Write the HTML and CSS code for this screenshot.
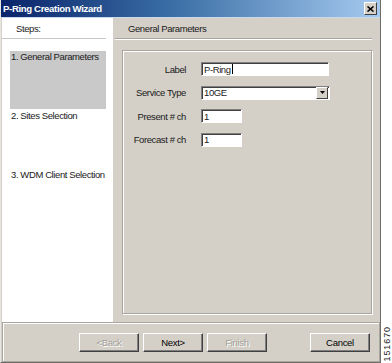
FILE: index.html
```html
<!DOCTYPE html>
<html lang="en">
<head>
  <meta charset="UTF-8">
  <title>P-Ring Creation Wizard</title>
  <link rel="stylesheet" href="styles.css">
</head>
<body>

<div class="dialog">
  <div class="titlebar">
    <span class="title">P-Ring Creation Wizard</span>
    <span class="close-btn">
      <svg width="7" height="6" viewBox="0 0 7 6"><path d="M0.5 0.5 L6.5 5.5 M6.5 0.5 L0.5 5.5" stroke="#000" stroke-width="1.6"/></svg>
    </span>
  </div>

  <div class="main">
    <div class="steps">
      <div class="steps-head">Steps:</div>
      <ul class="step-list">
        <li class="active">1. General Parameters</li>
        <li>2. Sites Selection</li>
        <li>3. WDM Client Selection</li>
      </ul>
    </div>

    <div class="content">
      <div class="content-head">General Parameters</div>
      <div class="group">
        <div class="form">
          <label>Label</label>
          <div class="field wide">P-Ring<span class="caret"></span></div>

          <label>Service Type</label>
          <div class="field combo">
            <span>10GE</span>
            <span class="drop">
              <svg width="5" height="3" viewBox="0 0 5 3"><path d="M0 0 H5 L2.5 3 Z" fill="#000"/></svg>
            </span>
          </div>

          <label>Present # ch</label>
          <div class="field short">1</div>

          <label>Forecast # ch</label>
          <div class="field short">1</div>
        </div>
      </div>
    </div>
  </div>

  <div class="footer">
    <button class="btn" disabled>&lt;Back</button>
    <button class="btn">Next&gt;</button>
    <button class="btn" disabled>Finish</button>
    <span class="spacer"></span>
    <button class="btn">Cancel</button>
  </div>
</div>

<div class="side">
  <span class="fig-num">151670</span>
</div>

</body>
</html>
```

FILE: styles.css
```css
body {
  margin: 0;
  width: 392px;
  height: 363px;
  display: flex;
  background-color: #fff;
  font-family: "Liberation Sans", Arial, sans-serif;
  font-size: 9.5px;
  letter-spacing: -0.4px;
  color: #1a1a1a;
  overflow: hidden;
}

.dialog {
  width: 381px;
  height: 363px;
  box-sizing: border-box;
  display: flex;
  flex-direction: column;
  background-color: #d4d0c8;
  border-left: 1px solid #e8e6e1;
  border-right: 1px solid #6f6d68;
  border-bottom: 1px solid #6f6d68;
}

.titlebar {
  height: 17px;
  flex: none;
  display: flex;
  align-items: center;
  justify-content: space-between;
  padding: 0 3px 0 2px;
  background: linear-gradient(to right, #0a246a 0%, #3a6ea5 45%, #a6caf0 100%);
  border-bottom: 1px solid #c9d8ea;
}

.title {
  color: #fff;
  font-weight: bold;
  font-size: 9.6px;
  letter-spacing: -0.35px;
}

.close-btn {
  width: 11px;
  height: 11px;
  display: flex;
  align-items: center;
  justify-content: center;
  background-color: #d4d0c8;
  border: 1px solid;
  border-color: #fff #404040 #404040 #fff;
}

.main {
  flex: 1;
  display: flex;
  padding-left: 1px;
}

.steps {
  width: 111px;
  background-color: #fff;
}

.steps-head {
  height: 20px;
  line-height: 22px;
  padding-left: 14px;
  margin-right: 7px;
  border-bottom: 1px solid #c8c8c8;
}

.step-list {
  list-style: none;
  margin: 12px 0 0 8px;
  padding: 0;
  width: 96px;
}

.step-list li {
  height: 59px;
  padding-left: 1px;
  line-height: 12px;
  white-space: nowrap;
}

.step-list li.active {
  height: 58px;
  margin-bottom: 1px;
  background-color: #c9c9c9;
}

.content {
  flex: 1;
  display: flex;
  flex-direction: column;
  padding: 0 8px 8px 2px;
}

.content-head {
  height: 20px;
  line-height: 22px;
  padding-left: 13px;
  border-bottom: 1px solid #a9a69f;
  box-shadow: 0 1px 0 #fff;
}

.group {
  flex: 1;
  margin: 11px 0 0 7px;
  border: 1px solid #a9a69f;
  box-shadow: inset 1px 1px 0 #fff, 1px 1px 0 #fff;
}

.form {
  display: grid;
  grid-template-columns: 63px auto;
  grid-auto-rows: 14px;
  row-gap: 9.5px;
  column-gap: 15px;
  padding-top: 11px;
  justify-items: start;
  align-items: center;
}

.form label {
  justify-self: end;
  white-space: nowrap;
}

.field {
  height: 14px;
  box-sizing: border-box;
  display: flex;
  align-items: center;
  padding-left: 2px;
  background-color: #fff;
  border: 1px solid;
  border-color: #808080 #fff #fff #808080;
  box-shadow: inset 1px 1px 0 #404040;
}

.wide {
  width: 128px;
}

.combo {
  width: 129px;
  justify-content: space-between;
  padding-right: 1px;
}

.short {
  width: 41px;
}

.caret {
  width: 1px;
  height: 10px;
  margin-left: 1px;
  background-color: #000;
}

.drop {
  width: 10px;
  height: 10px;
  display: flex;
  align-items: center;
  justify-content: center;
  background-color: #d4d0c8;
  border: 1px solid;
  border-color: #fff #404040 #404040 #fff;
}

.footer {
  height: 38px;
  flex: none;
  display: flex;
  align-items: center;
  gap: 4px;
  margin-left: 1px;
  padding: 0 9px 0 76px;
  border: 1px solid #a9a69f;
  box-shadow: inset 1px 1px 0 #fff;
}

.spacer {
  flex: 1;
}

.btn {
  width: 60px;
  height: 19px;
  padding: 0;
  font-family: inherit;
  font-size: 9.5px;
  letter-spacing: -0.3px;
  color: #000;
  background-color: #d4d0c8;
  border: 1px solid;
  border-color: #fff #404040 #404040 #fff;
  box-shadow: inset -1px -1px 0 #808080;
}

.btn:disabled {
  color: #a3a097;
  text-shadow: 1px 1px 0 #fff;
}

.side {
  flex: 1;
  display: flex;
  align-items: flex-end;
  justify-content: center;
  padding-bottom: 2px;
}

.fig-num {
  writing-mode: vertical-rl;
  transform: rotate(180deg);
  font-size: 9px;
  letter-spacing: 0.9px;
}
```
